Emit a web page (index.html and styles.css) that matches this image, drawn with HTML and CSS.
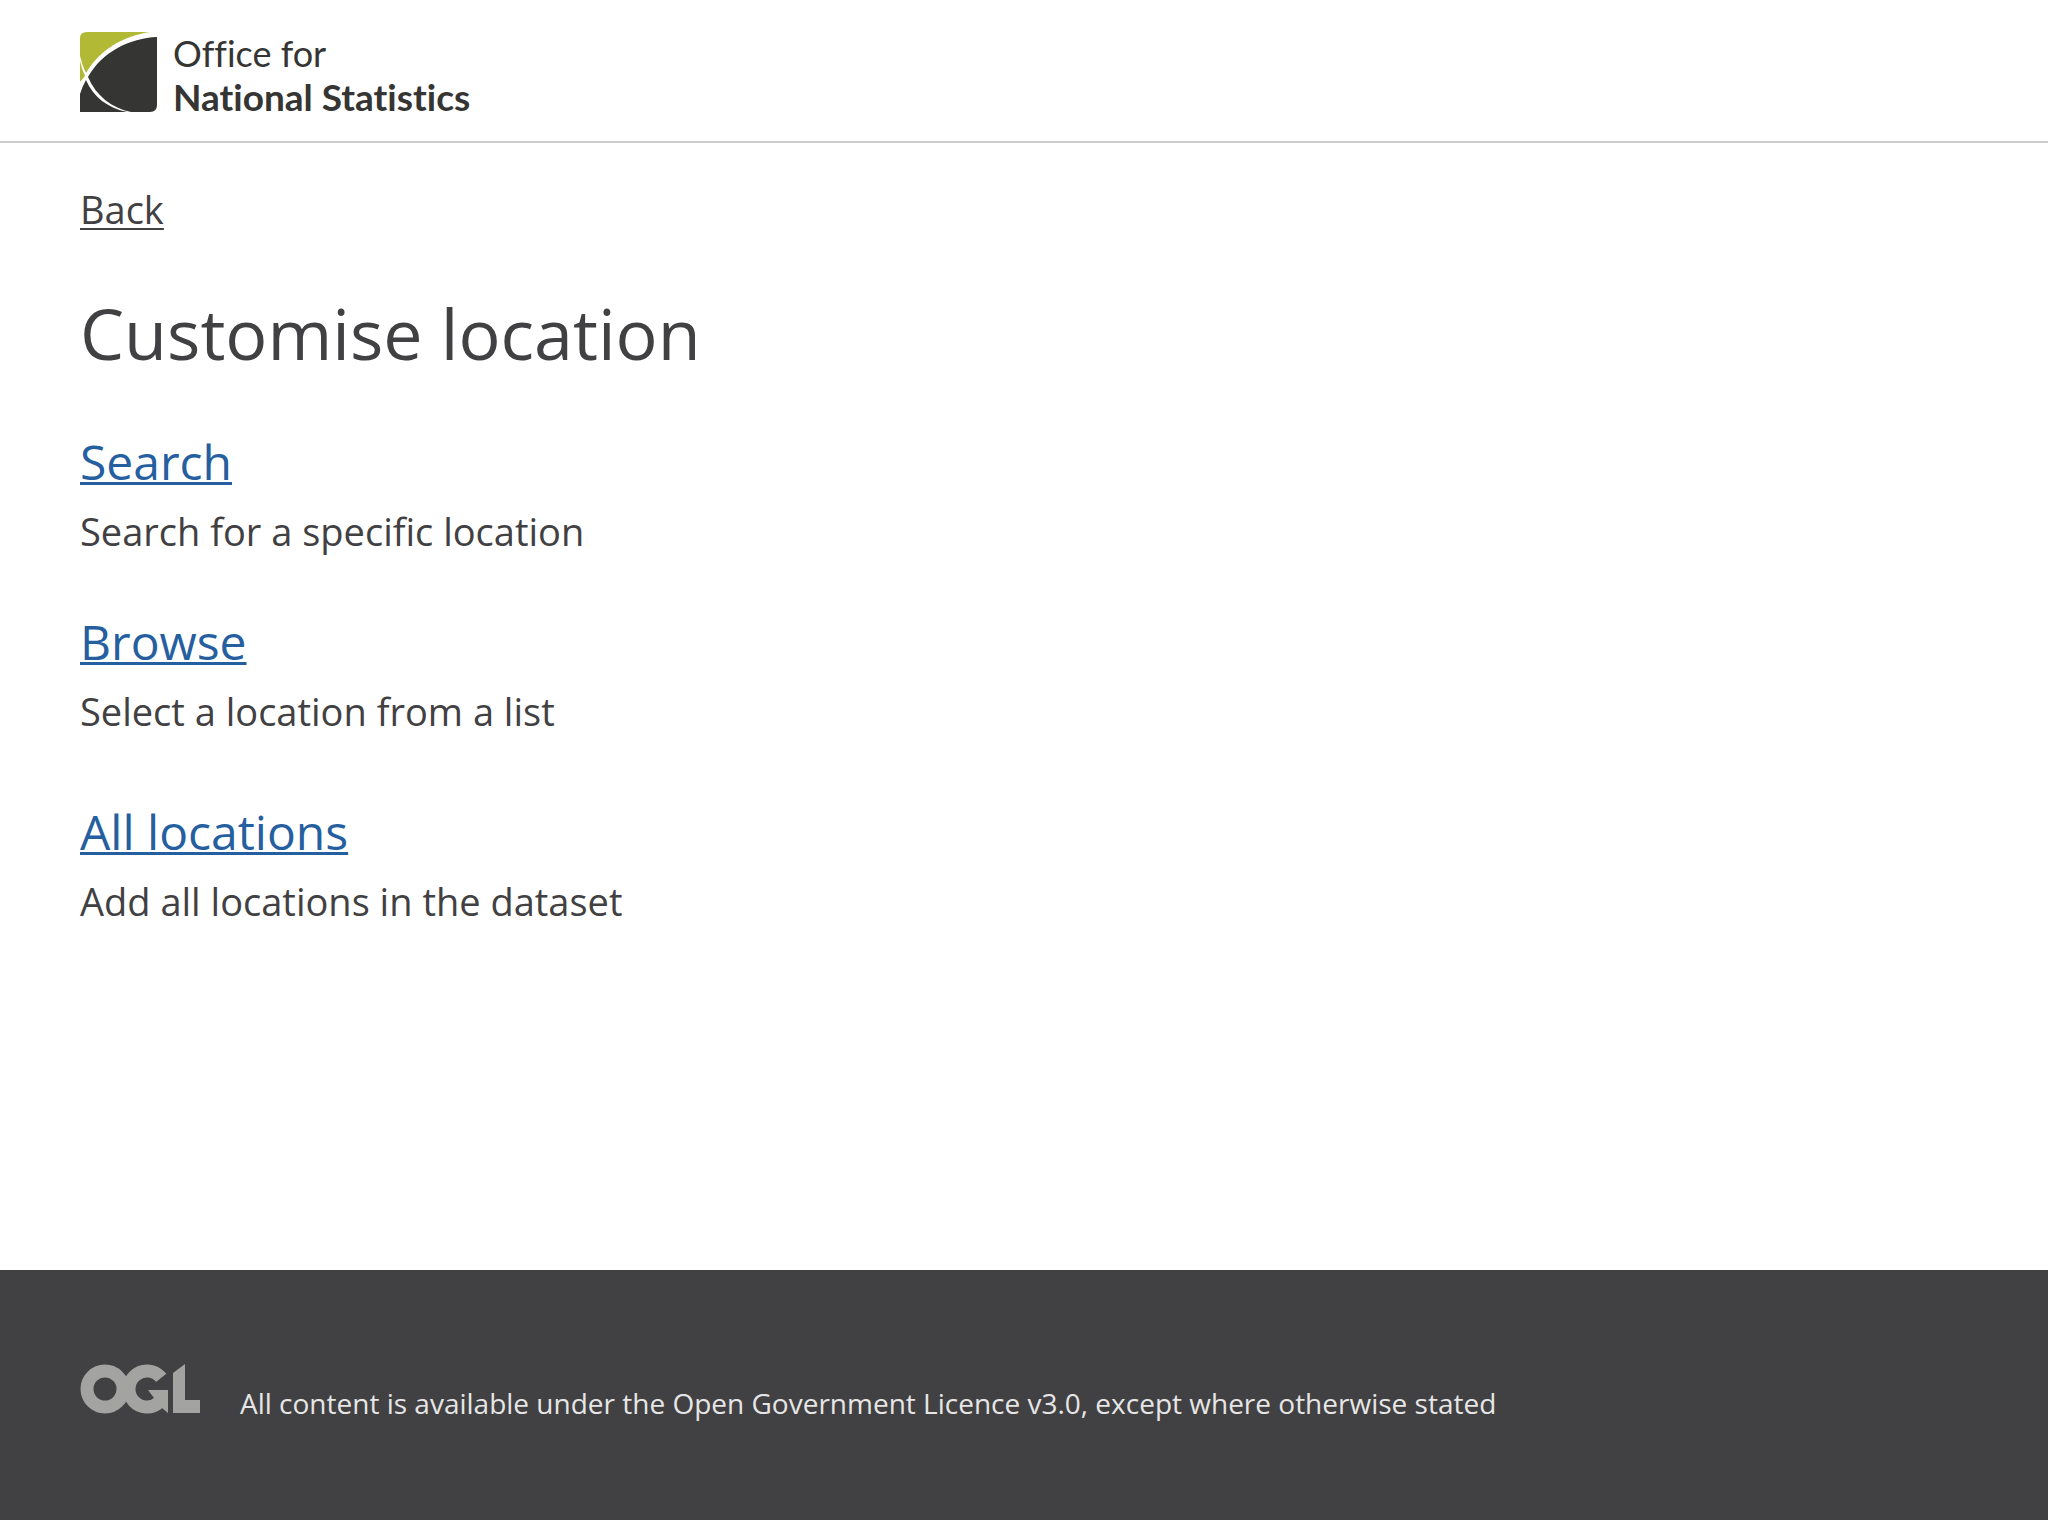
FILE: index.html
```html
<!DOCTYPE html>
<html lang="en">
<head>
<meta charset="utf-8">
<meta name="viewport" content="width=device-width, initial-scale=1">
<title>Customise location</title>
<link rel="stylesheet" href="styles.css">
</head>
<body>
<header class="header">
  <a class="brand" href="#">
    <svg class="brand-mark" viewBox="0 0 77 80" aria-hidden="true">
      <path fill="#b1b935" d="M0 6Q0 0 7 0H70C44 4 20 17 6 41Q2 33 0 24ZM0 29Q2 38 5 44L0 50Z"/>
      <path fill="#353533" d="M77 5C50 6 22 20 8 45C16 64 32 76 51 80H70Q77 80 77 73ZM6 48Q2 55 0 62V80H47C28 76 13 65 6 48Z"/>
    </svg>
    <span class="brand-name">
      <span class="brand-light">Office for</span>
      <span class="brand-bold">National Statistics</span>
    </span>
  </a>
</header>
<main class="main">
  <nav class="back"><a class="back-link" href="#">Back</a></nav>
  <h1 class="title">Customise location</h1>
  <section class="option">
    <h2 class="option-title"><a class="option-link" href="#">Search</a></h2>
    <p class="option-text">Search for a specific location</p>
  </section>
  <section class="option">
    <h2 class="option-title"><a class="option-link" href="#">Browse</a></h2>
    <p class="option-text">Select a location from a list</p>
  </section>
  <section class="option option-all">
    <h2 class="option-title"><a class="option-link" href="#">All locations</a></h2>
    <p class="option-text">Add all locations in the dataset</p>
  </section>
</main>
<footer class="footer">
  <svg class="ogl" viewBox="0 0 120 50" role="img" aria-label="OGL">
    <g fill="none" stroke="#a3a3a1" stroke-width="13">
      <circle cx="25" cy="25" r="18"/>
      <circle cx="67" cy="25" r="18" pathLength="360" stroke-dasharray="274 86" transform="rotate(48 67 25)"/>
    </g>
    <g fill="#a3a3a1">
      <polygon points="68,26 88,26 88,49 82,44 74,34"/>
      <polygon points="93,9 105,0 105,9"/>
      <rect x="93" y="9" width="12" height="40"/>
      <rect x="93" y="36" width="27" height="13"/>
    </g>
  </svg>
  <p class="licence">All content is available under the Open Government Licence v3.0, except where otherwise stated</p>
</footer>
</body>
</html>
```
FILE: styles.css
```css
* {
  box-sizing: border-box;
}

body {
  display: flex;
  flex-direction: column;
  min-height: 100vh;
  margin: 0;
  background: #fff;
  color: #414042;
  font-family: "Open Sans", "Noto Sans", sans-serif;
  font-size: 38px;
  line-height: 64px;
}

h1,
h2,
p {
  margin: 0;
  font-weight: 400;
}

.header {
  padding: 32px 80px 23px;
  border-bottom: 2px solid #ccc;
}

.brand {
  display: inline-flex;
  align-items: flex-start;
  gap: 16px;
  color: #353533;
  text-decoration: none;
  vertical-align: top;
}

.brand-mark {
  width: 77px;
  height: 80px;
}

.brand-name {
  display: flex;
  flex-direction: column;
  font-family: Lato, sans-serif;
  font-size: 36px;
  font-variant-ligatures: none;
  line-height: 43px;
}

.brand-light {
  font-weight: 400;
}

.brand-bold {
  font-size: 37px;
  font-weight: 700;
}

.main {
  flex: 1;
  padding: 34px 80px 64px;
}

.back-link {
  color: #414042;
  text-decoration-thickness: 2px;
  text-underline-offset: 4px;
}

.title {
  margin: 44px 0 49px;
  font-size: 70px;
  line-height: 96px;
}

.option {
  display: flex;
  flex-direction: column;
  gap: 5px;
  margin-bottom: 47px;
}

.option-all {
  margin-top: 57px;
}

.option-title {
  font-size: 48px;
}

.option-link {
  color: #265f9f;
  text-decoration-thickness: 3px;
  text-underline-offset: 2px;
}

.footer {
  display: flex;
  align-items: flex-start;
  gap: 40px;
  padding: 94px 80px;
  background: #414042;
  color: #e6e6e6;
}

.ogl {
  flex: none;
  width: 120px;
  height: 50px;
}

.licence {
  padding-top: 16px;
  font-size: 28px;
  line-height: 46px;
}
```
